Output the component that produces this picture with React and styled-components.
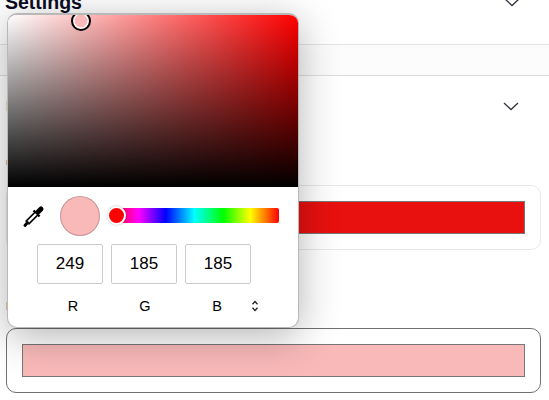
import React from 'react';
import styled, { createGlobalStyle } from 'styled-components';

const GlobalStyle = createGlobalStyle`
  html, body {
    margin: 0;
    padding: 0;
    background: #fff;
    font-family: 'Liberation Sans', Arial, sans-serif;
  }
`;

const Page = styled.div`
  position: relative;
  width: 549px;
  height: 400px;
  overflow: hidden;
  background: #fff;
`;

const Header = styled.div`
  display: flex;
  justify-content: space-between;
  align-items: flex-start;
  height: 44px;
  padding: 0 29px 0 5px;
  border-bottom: 1px solid #e3e3e3;
`;

const Title = styled.h1`
  margin: -9px 0 0;
  font-size: 19.5px;
  line-height: 22px;
  font-weight: 700;
  color: #0b0b24;
`;

const Strip = styled.div`
  height: 30px;
  background: #fcfcfc;
  border-bottom: 1px solid #dedede;
`;

const Section = styled.section`
  display: flex;
  flex-direction: column;
  padding-left: 6px;
`;

const SectionRow = styled.div`
  display: flex;
  justify-content: space-between;
  align-items: center;
  height: 60px;
  padding-right: 30px;
`;

const LabelTick = styled.span`
  display: block;
  width: 1px;
  height: ${p => p.$h}px;
  margin-top: ${p => p.$top || 0}px;
  background: ${p => p.$color};
`;

const Chevron = styled.svg`
  width: 16px;
  height: 9px;
  fill: none;
  stroke: #33333d;
  stroke-width: 1.3;
  margin-top: ${p => p.$top || 0}px;
`;

const ColorCard = styled.div`
  width: 535px;
  height: 65px;
  box-sizing: border-box;
  margin-top: ${p => p.$top}px;
  padding: 15px;
  border: 1px solid ${p => p.$border};
  border-radius: 10px;
`;

const ColorFill = styled.div`
  height: 33px;
  box-sizing: border-box;
  border: 1px solid #777;
  background: ${p => p.$color};
`;

const Popover = styled.div`
  position: absolute;
  left: 7px;
  top: 13px;
  width: 292px;
  height: 315px;
  box-sizing: border-box;
  border: 1px solid #b8b8b8;
  border-top-width: 2px;
  border-radius: 10px;
  background: #fff;
  overflow: hidden;
  box-shadow: 0 8px 40px rgba(0, 0, 0, 0.3);
  display: flex;
  flex-direction: column;
`;

const SatArea = styled.div`
  position: relative;
  height: 172px;
  flex: none;
  background: linear-gradient(to top, #000, transparent),
    linear-gradient(to right, #fff, #f00);
`;

const SatThumb = styled.div`
  position: absolute;
  left: 63px;
  top: -4px;
  width: 20px;
  height: 20px;
  box-sizing: border-box;
  border: 2.5px solid #000;
  border-radius: 50%;
  background: #f9b9b9;
  box-shadow: inset 0 0 0 1.5px #fff;
`;

const Controls = styled.div`
  display: flex;
  align-items: center;
  height: 58px;
  padding-left: 15px;
`;

const Dropper = styled.svg`
  width: 22px;
  height: 22px;
  flex: none;
  fill: none;
  stroke: #000;
`;

const Swatch = styled.div`
  width: 40px;
  height: 40px;
  box-sizing: border-box;
  margin-left: 15px;
  border: 1px solid rgba(0, 0, 0, 0.2);
  border-radius: 50%;
  background: ${p => p.$color};
`;

const HueBar = styled.div`
  position: relative;
  width: 169px;
  height: 15px;
  margin: -1px 0 0 10px;
  border-radius: 2px;
  background: linear-gradient(to right, #f00 0%, #f0f 17%, #00f 33%, #0ff 50%, #0f0 67%, #ff0 83%, #f00 100%);
`;

const HueThumb = styled.div`
  position: absolute;
  left: -3px;
  top: -2px;
  width: 19px;
  height: 19px;
  box-sizing: border-box;
  border: 2px solid #fff;
  border-radius: 50%;
  background: #f00;
  box-shadow: 0 0 2px rgba(0, 0, 0, 0.3);
`;

const Inputs = styled.div`
  display: flex;
  gap: 8px;
  padding: 0 0 0 29px;
  margin-top: -1px;
`;

const ValueBox = styled.div`
  width: 66px;
  height: 40px;
  box-sizing: border-box;
  display: flex;
  align-items: center;
  justify-content: center;
  border: 1px solid #ccc;
  border-radius: 2px;
  font-size: 17px;
  color: #000;
`;

const Channels = styled.div`
  display: flex;
  align-items: center;
  gap: 8px;
  padding-left: 33px;
  margin-top: 14px;
`;

const Channel = styled.span`
  width: 64px;
  text-align: center;
  font-size: 14.5px;
  line-height: 16px;
  color: #000;
`;

const ModeToggle = styled.svg`
  width: 8px;
  height: 12px;
  margin-left: -6px;
  fill: none;
  stroke: #222;
  stroke-width: 1.3;
`;

const chevronPath = 'M1 1l7 6.5L15 1';

export default function App() {
  return (
    <Page>
      <GlobalStyle />
      <Header>
        <Title>Settings</Title>
        <Chevron viewBox="0 0 16 9" $top={-2}>
          <path d={chevronPath} />
        </Chevron>
      </Header>
      <Strip />
      <Section>
        <SectionRow>
          <LabelTick $h={10} $color="#eee6c8" />
          <Chevron viewBox="0 0 16 9">
            <path d={chevronPath} />
          </Chevron>
        </SectionRow>
        <LabelTick $h={5} $top={24} $color="#eeb880" />
        <ColorCard $top={20} $border="#e8e8e8">
          <ColorFill $color="#e8110f" />
        </ColorCard>
        <LabelTick $h={8} $top={52} $color="#eecba0" />
        <ColorCard $top={18} $border="#707070">
          <ColorFill $color="#f9b9b9" />
        </ColorCard>
      </Section>
      <Popover>
        <SatArea>
          <SatThumb />
        </SatArea>
        <Controls>
          <Dropper viewBox="0 0 22 22">
            <path d="M13 9l5-5" strokeWidth="5" strokeLinecap="round" />
            <path d="M10.500 5.500l6 6" strokeWidth="2.400" />
            <path d="M12.500 9.500L4 18" strokeWidth="5.500" />
            <path d="M13 9L4 18" stroke="#fff" strokeWidth="2.400" />
            <path d="M4.500 17.500L2 20.500" strokeWidth="2.800" strokeLinecap="round" />
          </Dropper>
          <Swatch $color="#f9b9b9" />
          <HueBar>
            <HueThumb />
          </HueBar>
        </Controls>
        <Inputs>
          <ValueBox>249</ValueBox>
          <ValueBox>185</ValueBox>
          <ValueBox>185</ValueBox>
        </Inputs>
        <Channels>
          <Channel>R</Channel>
          <Channel>G</Channel>
          <Channel>B</Channel>
          <ModeToggle viewBox="0 0 8 12">
            <path d="M1.500 4.200L4 1.500l2.500 2.700M1.500 7.800L4 10.500l2.500-2.700" />
          </ModeToggle>
        </Channels>
      </Popover>
    </Page>
  );
}
